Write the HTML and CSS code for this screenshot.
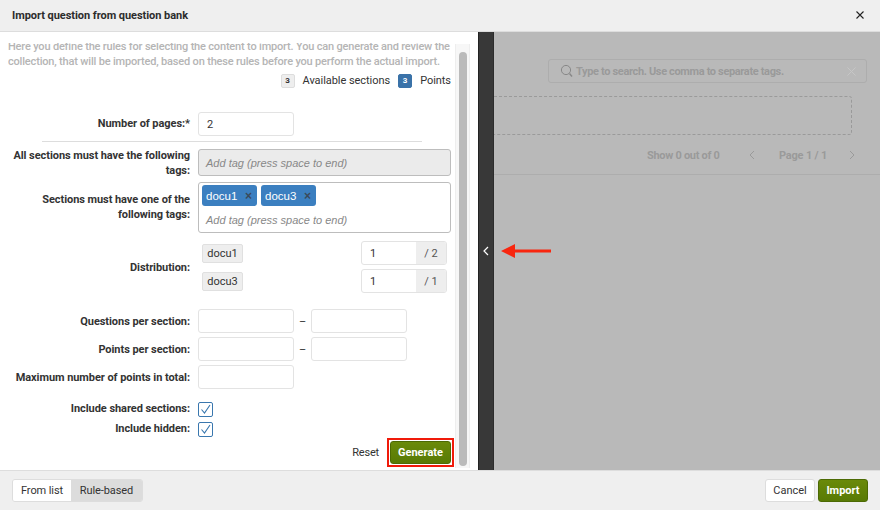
FILE: index.html
```html
<!DOCTYPE html>
<html lang="en">
<head>
<meta charset="utf-8">
<title>Import question from question bank</title>
<link rel="stylesheet" href="styles.css">
</head>
<body>
<div class="modal">
  <header class="head">
    <h1>Import question from question bank</h1>
    <svg class="close" width="10" height="10" viewBox="0 0 10 10"><path d="M1.500 1.500l7 7M8.500 1.500l-7 7" stroke="#222" stroke-width="1.100" fill="none"/></svg>
  </header>
  <main class="main">
    <section class="left">
      <div class="scroll">
        <div class="content">
          <p class="intro">Here you define the rules for selecting the content to import. You can generate and review the collection, that will be imported, based on these rules before you perform the actual import.</p>
          <div class="legend">
            <span class="badge">3</span><span>Available sections</span>
            <span class="badge blue">3</span><span>Points</span>
          </div>
          <div class="row pages"><label>Number of pages:*</label><div class="inp">2</div></div>
          <hr class="rule">
          <div class="row r-all"><label>All sections must have the following tags:</label><div class="tagbox off"><span class="ph">Add tag (press space to end)</span></div></div>
          <div class="row r-one"><label>Sections must have one of the following tags:</label>
            <div class="tagbox on">
              <div class="tags"><span class="tag">docu1<b>×</b></span><span class="tag">docu3<b>×</b></span></div>
              <span class="ph">Add tag (press space to end)</span>
            </div>
          </div>
          <div class="row r-dist"><label>Distribution:</label>
            <div class="dist">
              <div class="dline"><span class="chip">docu1</span><div class="group"><span class="gval">1</span><span class="gadd">/ 2</span></div></div>
              <div class="dline"><span class="chip">docu3</span><div class="group"><span class="gval">1</span><span class="gadd">/ 1</span></div></div>
            </div>
          </div>
          <div class="row r-q"><label>Questions per section:</label><div class="inp"></div><span class="dash">–</span><div class="inp"></div></div>
          <div class="row r-p"><label>Points per section:</label><div class="inp"></div><span class="dash">–</span><div class="inp"></div></div>
          <div class="row r-p"><label>Maximum number of points in total:</label><div class="inp"></div></div>
          <div class="row r-c1"><label>Include shared sections:</label><span class="check"><svg width="15" height="15" viewBox="0 0 15 15"><path d="M3.500 7.500l3 3.500 5.500-8" stroke="#3a77ae" stroke-width="1.100" fill="none"/></svg></span></div>
          <div class="row r-c2"><label>Include hidden:</label><span class="check"><svg width="15" height="15" viewBox="0 0 15 15"><path d="M3.500 7.500l3 3.500 5.500-8" stroke="#3a77ae" stroke-width="1.100" fill="none"/></svg></span></div>
          <div class="actions"><span class="reset">Reset</span><span class="mark"><span class="btn green gen">Generate</span></span></div>
        </div>
      </div>
      <div class="track"><div class="thumb"></div></div>
    </section>
    <div class="divider"><svg width="6" height="10" viewBox="0 0 6 10"><path d="M5 1L1 5l4 4" stroke="#fff" stroke-width="1.200" fill="none"/></svg></div>
    <section class="right">
      <div class="search">
        <svg width="13" height="14" viewBox="0 0 13 14"><circle cx="6" cy="6" r="4.600" stroke="#888" fill="none"/><path d="M9.500 9.500l2.500 3" stroke="#888" stroke-width="1.400" fill="none"/></svg>
        <span class="stext">Type to search. Use comma to separate tags.</span>
        <svg class="sx" width="9" height="9" viewBox="0 0 9 9"><path d="M.5.5l8 8M8.500.5l-8 8" stroke="#c6c6c6" fill="none"/></svg>
      </div>
      <div class="drop"></div>
      <div class="pager">
        <span class="show">Show 0 out of 0</span>
        <svg width="6" height="10" viewBox="0 0 6 10"><path d="M5 1L1 5l4 4" stroke="#9a9a9a" fill="none"/></svg>
        <span class="page">Page 1 / 1</span>
        <svg width="6" height="10" viewBox="0 0 6 10"><path d="M1 1l4 4-4 4" stroke="#9a9a9a" fill="none"/></svg>
      </div>
      <div class="line"></div>
      <svg class="arrow" width="50" height="16" viewBox="0 0 50 16"><path d="M0 8l14-7v5.500h36v3H14V15z" fill="#f8260f"/></svg>
    </section>
  </main>
  <footer class="foot">
    <div class="seg"><span class="seg1">From list</span><span class="seg2">Rule-based</span></div>
    <div class="right-btns"><span class="btn cancel">Cancel</span><span class="btn green imp">Import</span></div>
  </footer>
</div>
</body>
</html>
```
FILE: styles.css
```css
* { box-sizing: border-box; }
html, body { margin: 0; height: 100%; }
body { font-family: Roboto, "Noto Sans", sans-serif; font-size: 11px; color: #333; background: #fff; overflow: hidden; }
.modal { width: 880px; height: 510px; display: flex; flex-direction: column; }
.head { height: 32px; background: #efefef; border-bottom: 1px solid #ddd; display: flex; align-items: center; justify-content: space-between; padding: 0 15px 1px 12px; flex: none; }
.head h1 { margin: 0; font-size: 11px; font-weight: 700; color: #2c2c2c; letter-spacing: -.05px; }
.main { flex: 1; display: flex; min-height: 0; }
.left { width: 478px; position: relative; padding-top: 11px; background: #fff; flex: none; }
.scroll { height: 427px; overflow: hidden; width: 455px; }
.content { margin-top: -4px; padding-left: 8px; padding-right: 3px; }
.intro { margin: 0; font-size: 11px; line-height: 15px; color: #b5b5b5; font-weight: 500; height: 30px; overflow: hidden; letter-spacing: -.18px; }
.legend { height: 15px; margin-top: 4px; padding-right: 1px; display: flex; justify-content: flex-end; align-items: center; font-size: 11px; color: #333; letter-spacing: -.05px; }
.badge { width: 14px; height: 14px; border-radius: 2px; background: #eee; border: 1px solid #ddd; font-size: 8px; font-weight: 700; display: flex; align-items: center; justify-content: center; margin: 0 8px 0 8px; }
.badge.blue { background: #3a72a8; border-color: #3a72a8; color: #fff; }
.row { display: flex; align-items: center; }
.row label { width: 182px; margin: -3px 8px -3px 0; text-align: right; font-weight: 700; font-size: 11px; line-height: 15px; color: #333; flex: none; letter-spacing: -.06px; }
.inp { width: 96px; height: 24px; border: 1px solid #e3e3e3; border-radius: 3px; background: #fff; padding-left: 8px; line-height: 23px; font-size: 11px; color: #333; flex: none; }
.pages { margin-top: 24px; }
.pages label { margin: -4px 8px -2px 0; }
.rule { border: 0; border-top: 1px solid #ddd; width: 380px; margin: 5px 0 7px 34px; height: 1px; }
.tagbox { width: 253px; border: 1px solid #bdbdbd; border-radius: 3px; padding-left: 7px; }
.ph { font-family: "Liberation Sans", sans-serif; font-style: italic; font-size: 11px; color: #888; }
.off { height: 27px; background: #ebebeb; display: flex; align-items: center; }
.on { height: 51px; padding-left: 3px; padding-top: 2px; }
.on .ph { display: block; margin: 7px 0 0 4px; line-height: 15px; }
.r-one { margin-top: 6px; }
.r-one label { margin: -4px 8px -2px 0; }
.tags { display: flex; gap: 4px; }
.tag { height: 21px; border-radius: 3px; background: #3b7fc0; color: #fff; padding: 0 5px 0 4px; font-size: 11.5px; display: flex; align-items: center; width: 55px; justify-content: space-between; font-family: "Liberation Sans", sans-serif; }
.tag b { color: #3a4a5a; font-size: 12px; }
.r-dist { margin-top: 8px; height: 52px; }
.dist { width: 249px; display: flex; flex-direction: column; gap: 4px; }
.dline { display: flex; justify-content: space-between; align-items: center; height: 24px; padding-left: 4px; }
.chip { width: 41px; height: 19px; background: #eee; border: 1px solid #e0e0e0; border-radius: 2px; font-size: 11px; line-height: 17px; text-align: center; }
.group { display: flex; width: 86px; height: 24px; border: 1px solid #e3e3e3; border-radius: 3px; overflow: hidden; }
.gval { flex: 1; padding-left: 8px; line-height: 23px; }
.gadd { width: 30px; background: #eee; text-align: center; line-height: 23px; color: #555; font-size: 11px; }
.dash { width: 17px; text-align: center; flex: none; font-size: 11px; }
.r-q { margin-top: 16px; }
.r-p { margin-top: 4px; }
.check { width: 15px; height: 15px; border: 1px solid #3a77ae; border-radius: 2px; display: block; background: #fff; }
.check svg { display: block; margin: -1px; }
.r-c1 { margin-top: 13px; height: 15px; }
.r-c2 { margin-top: 5px; height: 15px; }
.r-c1 label, .r-c2 label { margin: -4px 8px -2px 0; }
.actions { display: flex; justify-content: flex-end; align-items: center; margin-top: 1px; height: 29px; }
.reset { margin-right: 8px; font-size: 11px; letter-spacing: -.2px; }
.mark { border: 2px solid #f01a0a; padding: 1px; margin-right: -2px; display: block; }
.btn { height: 23px; display: flex; align-items: center; justify-content: center; border-radius: 3px; font-size: 11px; font-weight: 700; }
.green { background: linear-gradient(#6a8a0a, #587a05); border: 1px solid #4c6a04; color: #fff; }
.gen { width: 61px; }
.track { position: absolute; left: 455px; top: 12px; bottom: 2px; width: 15px; background: #f7f7f7; border-left: 1px solid #eee; border-right: 1px solid #eee; }
.thumb { position: absolute; left: 3px; width: 8px; top: 8px; bottom: 2px; border-radius: 4px; background: #bbb; }
.divider { width: 16px; flex: none; background: #383838; border-left: 1px solid #222; border-right: 1px solid #2c2c2c; display: flex; align-items: center; justify-content: center; }
.right { flex: 1; background: #b9b9b9; position: relative; padding-top: 27px; overflow: hidden; color: #9a9a9a; }
.search { margin-left: 54px; width: 319px; height: 24px; border: 1px solid #adadad; border-radius: 3px; display: flex; align-items: center; padding: 0 10px 0 11px; gap: 3px; }
.stext { flex: 1; font-size: 11px; font-weight: 700; color: #9a9a9a; letter-spacing: -.35px; }
.drop { height: 39px; width: 358px; margin-top: 13px; border: 1px dashed #9a9a9a; border-left: 0; border-radius: 0 3px 3px 0; }
.pager { display: flex; align-items: center; height: 20px; margin-top: 10px; padding-left: 153px; font-size: 11px; font-weight: 700; color: #9a9a9a; }
.show { width: 102px; letter-spacing: -.3px; }
.page { width: 70px; margin-left: 24px; letter-spacing: -.2px; }
.line { height: 1px; background: #adadad; margin-top: 9px; }
.arrow { position: absolute; left: 7px; top: 211px; }
.foot { height: 40px; flex: none; background: #efefef; border-top: 1px solid #ddd; display: flex; justify-content: space-between; align-items: center; padding: 0 12px; }
.seg { display: flex; height: 23px; border: 1px solid #ddd; border-radius: 3px; font-size: 11px; overflow: hidden; letter-spacing: -.1px; }
.seg1 { width: 58px; background: #fff; text-align: center; line-height: 21px; }
.seg2 { width: 71px; background: #dcdcdc; text-align: center; line-height: 21px; }
.right-btns { display: flex; gap: 3px; }
.cancel { width: 50px; background: #fff; border: 1px solid #ddd; color: #333; font-weight: 400; }
.imp { width: 50px; }
```
